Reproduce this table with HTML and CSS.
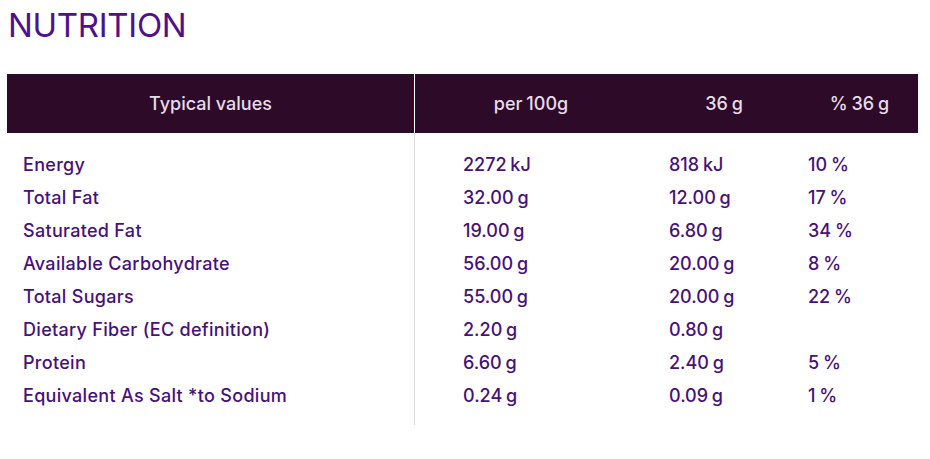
FILE: index.html
```html
<!DOCTYPE html>
<html lang="en">
<head>
<meta charset="utf-8">
<title>Nutrition</title>
<link rel="stylesheet" href="styles.css">
</head>
<body>
<section class="nutrition">
  <h1 class="title">NUTRITION</h1>
  <div class="table">
    <div class="row head">
      <div class="cell c1">Typical values</div>
      <div class="cell c2">per 100g</div>
      <div class="cell c3">36 g</div>
      <div class="cell c4">% 36 g</div>
    </div>
    <div class="row">
      <div class="cell c1">Energy</div><div class="cell c2">2272 kJ</div><div class="cell c3">818 kJ</div><div class="cell c4">10 %</div>
    </div>
    <div class="row">
      <div class="cell c1">Total Fat</div><div class="cell c2">32.00 g</div><div class="cell c3">12.00 g</div><div class="cell c4">17 %</div>
    </div>
    <div class="row">
      <div class="cell c1">Saturated Fat</div><div class="cell c2">19.00 g</div><div class="cell c3">6.80 g</div><div class="cell c4">34 %</div>
    </div>
    <div class="row">
      <div class="cell c1">Available Carbohydrate</div><div class="cell c2">56.00 g</div><div class="cell c3">20.00 g</div><div class="cell c4">8 %</div>
    </div>
    <div class="row">
      <div class="cell c1">Total Sugars</div><div class="cell c2">55.00 g</div><div class="cell c3">20.00 g</div><div class="cell c4">22 %</div>
    </div>
    <div class="row">
      <div class="cell c1">Dietary Fiber (EC definition)</div><div class="cell c2">2.20 g</div><div class="cell c3">0.80 g</div><div class="cell c4"></div>
    </div>
    <div class="row">
      <div class="cell c1">Protein</div><div class="cell c2">6.60 g</div><div class="cell c3">2.40 g</div><div class="cell c4">5 %</div>
    </div>
    <div class="row">
      <div class="cell c1">Equivalent As Salt *to Sodium</div><div class="cell c2">0.24 g</div><div class="cell c3">0.09 g</div><div class="cell c4">1 %</div>
    </div>
  </div>
</section>
</body>
</html>
```

FILE: styles.css
```css
* { box-sizing: border-box; }
html, body { margin: 0; padding: 0; background: #fff; }
body {
  font-family: Inter, "Noto Sans", sans-serif;
  color: #461178;
}
.nutrition { padding: 0 12px 0 7px; }
.title {
  margin: 0;
  padding-top: 5px;
  padding-left: 1px;
  height: 74px;
  font-size: 33px;
  font-weight: 400;
  line-height: 40px;
  letter-spacing: -0.3px;
  color: #4e1187;
}
.table { width: 911px; }
.row {
  display: grid;
  grid-template-columns: 408px 232px 154px 117px;
}
.cell {
  font-size: 18px;
  font-weight: 500;
  line-height: 33px;
  height: 33px;
  white-space: nowrap;
}
.row .c1 { border-right: 1px solid #dcdcdc; padding-left: 16px; letter-spacing: 0.3px; }
.row .c2 { padding-left: 48px; word-spacing: -1px; }
.row .c3 { padding-left: 22px; word-spacing: -1px; }
.row .c4 { padding-left: 7px; word-spacing: -1px; }

.row.head { background: #2d0a27; }
.row.head .cell {
  height: 59px;
  line-height: 59px;
  text-align: center;
  padding-left: 0;
  color: #e6dcea;
  font-size: 18px;
  letter-spacing: 0;
}
.row.head .c1 { border-right: 1px solid #ffffff; }

.row:nth-child(2) .cell { height: 48px; padding-top: 15px; }
.row:last-child .cell { height: 46px; padding-bottom: 13px; }
```
